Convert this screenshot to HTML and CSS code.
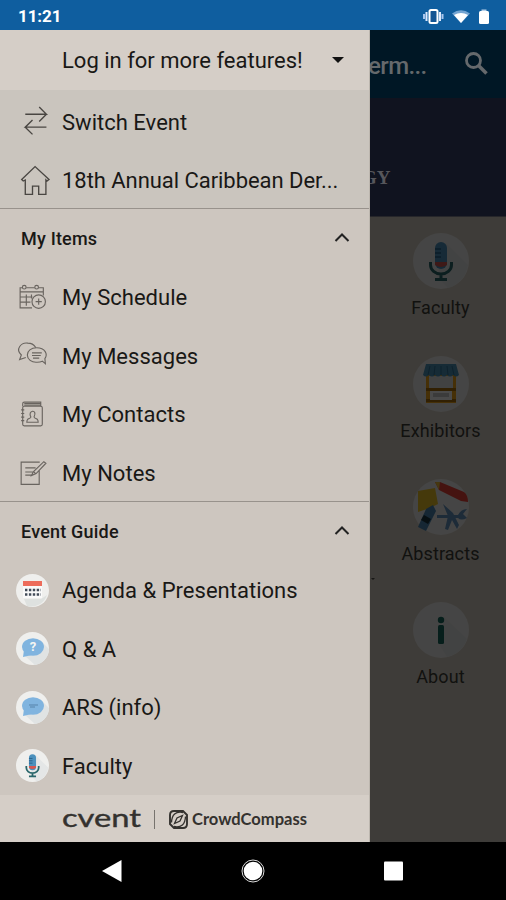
FILE: index.html
```html
<!DOCTYPE html>
<html lang="en">
<head>
<meta charset="utf-8">
<title>Event menu</title>
<link rel="stylesheet" href="styles.css">
</head>
<body>
<svg class="defs" width="0" height="0" aria-hidden="true">
  <symbol id="mic" viewBox="0 0 56 56">
    <circle cx="28" cy="28" r="28" fill="#efefed"/>
    <path d="M33 10 55 32a28 28 0 0 1-20 23L24 44z" fill="#e4e6e6"/>
    <path d="M17.500 29v3a10.500 9 0 0 0 21 0v-3M28 41v6M22 46.500h12" fill="none" stroke="#28666a" stroke-width="3"/>
    <rect x="22" y="9" width="12" height="27" rx="6" fill="#4c91bd"/>
    <path d="M22 29h12v3q-6 4-12 0z" fill="#d5564f"/>
    <path d="M22 16h6M22 20h6M22 24h6" stroke="#245d87" stroke-width="1.500"/>
  </symbol>
  <symbol id="bubble" viewBox="0 0 33 33">
    <circle cx="16.500" cy="16.500" r="16.500" fill="#efefed"/>
    <path d="m26 10 7 7a16.500 16.500 0 0 1-14 16L9 24z" fill="#e0e3e3"/>
    <ellipse cx="17" cy="15" rx="11" ry="8.700" fill="#80b4df"/>
    <path d="m8 18-1 7 9-2z" fill="#80b4df"/>
  </symbol>
</svg>
<header class="status">
  <span>11:21</span>
  <svg width="70" height="20" viewBox="0 0 70 20">
    <path d="M2 8v5M20.500 8v5" stroke="#a9c6ed" stroke-width="2"/>
    <path d="M4.500 6v9M18 6v9" stroke="#dce9ff" stroke-width="2"/>
    <rect x="7.500" y="4" width="8" height="13" rx="1.500" fill="#125594" stroke="#fff" stroke-width="2"/>
    <path d="M30 7.500Q39 1 48 7.500L39 17z" fill="#75a5d2"/>
    <path d="M32 9Q39 5 46 9L39 17z" fill="#fff"/>
    <rect x="57" y="5" width="10" height="13" rx="1.500" fill="#fff"/><path d="M59.500 3.500h5V5h-5z" fill="#b8d1e9"/>
  </svg>
</header>
<main class="screen">
  <nav class="drawer">
    <div class="login"><span>Log in for more features!</span><i class="caret"></i></div>
    <section class="group first">
      <div class="row"><svg class="icon line" viewBox="0 0 32 32"><path d="M9 9h20.500l-7-7m7 7-7 7M29.500 21.500H9l7-7m-7 7 7 7"/></svg><span>Switch Event</span></div>
      <div class="row"><svg class="icon line" viewBox="0 0 32 32"><path d="M5.500 15 18.500 2.500 32 15l-2 1.500-1-1v14h-7v-8h-6v8h-7v-14l-2 1z"/></svg><span class="home">18th Annual Caribbean Der...</span></div>
    </section>
    <section class="group">
      <h2>My Items<svg class="chevron" viewBox="0 0 16 10"><path d="m1.500 8 6.500-6.500L14.500 8"/></svg></h2>
      <div class="row"><svg class="icon fine" viewBox="0 0 32 32"><path d="M15.500 26H4V6.500h2M10 6.500h8M22 6.500h4.500V14M4 10.500h22.500M4 15.500h12M4 20.500h10M10 13v11M15 13v4"/><circle cx="8" cy="6" r="1.800"/><circle cx="20" cy="6" r="1.800"/><circle cx="22" cy="20" r="6.500"/><path d="M22 17v6M19 20h6"/></svg><span>My Schedule</span></div>
      <div class="row"><svg class="icon fine" viewBox="0 0 32 32"><path d="M9.500 18 3.500 20l1.700-4.500C-1 10 5 3 11.500 4q5 0 7.500 4M20 8.500c-5.500 0-9 3-9 7s4 7.500 9.500 7q3 0 5-1l3 2.500-.5-5c3-4 .5-10.500-8-10.500M15.500 13.500h9.500M15.500 16h8.500M16.500 18.500h6"/></svg><span>My Messages</span></div>
      <div class="row"><svg class="icon fine" viewBox="0 0 32 32"><path d="M6.500 8V5.500Q6.500 4 8 4h16v4M8 5.500h16M8 7h16"/><rect x="6.500" y="8" width="19" height="19" rx="1.500"/><path d="M5 11.500h3M5 15h3M5 18.500h3M5 22h3"/><path d="M14.500 18.500c-4-6.500 7-8.500 3 0q0 1 3 2 1 1 1 3h-11q0-2 1-3 3-1 3-2"/></svg><span>My Contacts</span></div>
      <div class="row"><svg class="icon fine" viewBox="0 0 32 32"><path d="M23 6H5v21.500h17.500V14M9 11.500h10M9 15.500h8M9 18.500h6M15 19l2-4L27 5.500l2 1.500-9.500 10zM17 15l2 2"/></svg><span>My Notes</span></div>
    </section>
    <section class="group">
      <h2>Event Guide<svg class="chevron" viewBox="0 0 16 10"><path d="m1.500 8 6.500-6.500L14.500 8"/></svg></h2>
      <div class="row"><svg class="round" viewBox="0 0 33 33"><circle cx="16.500" cy="16.500" r="16.500" fill="#efefed"/><path d="M8 25h17l6-4a16.500 16.500 0 0 1-20 11z" fill="#dee1df"/><path d="M7 7h19v17H7z" fill="#fafafa"/><path d="M7 7h19v5H7z" fill="#ed6c5b"/><path d="M9 16h16M9 20.500h16" stroke="#424b58" stroke-width="2.500" stroke-dasharray="2.400 1.500"/></svg><span>Agenda &amp; Presentations</span></div>
      <div class="row"><svg class="round" viewBox="0 0 33 33"><use href="#bubble"/><text class="question" x="17" y="19">?</text></svg><span>Q &amp; A</span></div>
      <div class="row"><svg class="round" viewBox="0 0 33 33"><use href="#bubble"/><path d="M13 14h9M14 16h5" stroke="#5683aa"/></svg><span>ARS (info)</span></div>
      <div class="row"><svg class="round" viewBox="0 0 56 56"><use href="#mic"/></svg><span>Faculty</span></div>
    </section>
    <footer class="brand">
      <svg width="246" height="40" viewBox="0 -8 246 40">
        <text class="cvent" x="0" y="20" textLength="79" lengthAdjust="spacingAndGlyphs">cvent</text>
        <path d="M92.500 3v19" stroke="#77736e"/>
        <path d="M112 4h9l4 4v9q0 4-4 4h-9l-4-4V8q0-4 4-4z" fill="none" stroke="#34322f" stroke-width="1.900"/>
        <path d="M121 5.500q-11-2-11.500 10M112 19.500q11 2 11.500-10M120.500 8.500 118 14l-5.500 2.500L115 11z" fill="none" stroke="#34322f" stroke-width="1.300"/>
        <text class="compass" x="130" y="18" textLength="115" lengthAdjust="spacingAndGlyphs">CrowdCompass</text>
      </svg>
    </footer>
  </nav>
  <aside class="page">
    <div class="appbar"><span>erm...</span><svg width="26" height="26" viewBox="0 0 26 26"><circle cx="9.500" cy="9.500" r="7" fill="none" stroke="#65696c" stroke-width="2.800"/><path d="m14.500 14.500 8 8" stroke="#65696c" stroke-width="3.500"/></svg></div>
    <div class="banner"><span>GY</span></div>
    <div class="tiles">
      <div class="tile"><svg viewBox="0 0 56 56"><use href="#mic"/></svg><span>Faculty</span></div>
      <div class="tile"><svg viewBox="0 0 56 56"><circle cx="28" cy="28" r="28" fill="#efefed"/><path d="M13 19h30v28H13z" fill="#f0a719"/><path d="M16 20h24v12H16z" fill="#dfe3e5"/><path d="M13 32h30v3H13zM13 43h30v3H13z" fill="#a86d0a"/><path d="M17 35h22v9H17z" fill="#fff"/><path d="M20 39h16" stroke="#ccc" stroke-width="4"/><path d="M13 8h30l3 11q-3 3-6 0-3 3-6 0-3 3-6 0-3 3-6 0-3 3-6 0-3 3-6 0z" fill="#4b93ba"/><path d="m17 10-2 9m7-9-1 9m7-9v9m6-9 1 9m4-9 2 9" stroke="#2f7398"/></svg><span>Exhibitors</span></div>
      <div class="tile"><svg viewBox="0 0 56 56"><circle cx="28" cy="28" r="28" fill="#efefed"/><path d="m5 12 17-3 3 16-8 4-12 4z" fill="#efc326"/><path d="m22 3 5 0 24 10q4 3 4 10l-7-1-22-11z" fill="#ef4038"/><path d="m22 3 5 0-1 8z" fill="#f1c23c"/><path d="m20 26 3 6-10 20-8-4 8-18z" fill="#4b87b2"/><path d="m11 36 7 4-3 5-7-4z" fill="#19333e"/><path d="M24 36h21q3-6 9-6l-4 5 4 4q-6 3-9 0H24zM30 25l10 9 6 12-2 4-5-9-4 10-3-1 3-13z" fill="#6594c1"/></svg><span>Abstracts</span></div>
      <div class="tile"><svg viewBox="0 0 56 56"><circle cx="28" cy="28" r="28" fill="#efefed"/><path d="M31 15 54 37a28 28 0 0 1-20 18l-8-13z" fill="#e5e7e6"/><circle cx="28" cy="18" r="3.200" fill="#16685d"/><rect x="25" y="23" width="6" height="19" rx="1.500" fill="#16685d"/></svg><span>About</span></div>
    </div>
    <i class="tick"></i>
  </aside>
</main>
<footer class="system">
  <svg width="506" height="58" viewBox="0 0 506 58"><path d="M102 29 121.500 18v22z" fill="#fff"/><circle cx="253" cy="29" r="11" fill="none" stroke="#ddd"/><circle cx="253" cy="29" r="9.300" fill="#fff"/><rect x="384" y="19.500" width="19" height="19" rx="1" fill="#fff"/></svg>
</footer>
</body>
</html>
```
FILE: styles.css
```css
* { box-sizing: border-box; }
body { margin: 0; width: 506px; height: 900px; overflow: hidden; background: #000; font-family: Roboto, sans-serif; }
.defs { position: absolute; }
.status { height: 30px; padding: 1px 14px 0 18px; background: #0f5e9f; color: #fff; display: flex; align-items: center; justify-content: space-between; font-size: 17px; font-weight: 700; letter-spacing: -.1px; }
.screen { height: 812px; display: flex; }
.drawer { width: 370px; height: 812px; background: #cdc6bf; color: #191816; border-right: 1px solid #bcb6ae; display: flex; flex-direction: column; }
.login { height: 60px; padding: 1px 25px 0 62px; background: #d5cec7; display: flex; align-items: center; justify-content: space-between; font-size: 22px; }
.caret { border: 6px solid transparent; border-top-color: #111; border-bottom: 0; position: relative; top: -1px; }
.group { height: 293.2px; border-bottom: 1.500px solid #98928c; }
.group.first { height: 119px; padding-top: 2px; background: #cac5be; }
.group:last-of-type { border-bottom: 0; }
.row { height: 58.500px; padding: 1px 0 0 16px; display: flex; align-items: center; font-size: 22px; letter-spacing: .02px; white-space: nowrap; }
.row span { margin-left: 13px; padding-top: 1px; }
.icon { width: 33px; height: 33px; overflow: visible; fill: none; }
.line { stroke: #494642; stroke-width: 1.300; }
.fine { stroke: #69645f; stroke-width: 1.100; }
.round { width: 33px; height: 33px; }
.row .home { letter-spacing: -.05px; }
h2 { height: 58.500px; margin: 0; padding: 0 19px 0 21px; display: flex; align-items: center; justify-content: space-between; font-size: 18px; font-weight: 500; letter-spacing: .2px; }
.chevron { width: 16px; height: 10px; fill: none; stroke: #222; stroke-width: 2; }
.question { fill: #f5f6f2; font-size: 13px; font-weight: 700; text-anchor: middle; letter-spacing: 0; }
.brand { flex: 1; padding-left: 62px; background: #d5cec7; display: flex; align-items: center; }
.brand svg { overflow: visible; }
.cvent { font-family: Lato, sans-serif; font-size: 25px; fill: #34322f; stroke: #34322f; stroke-width: .4px; }
.compass { font-family: Lato, sans-serif; font-size: 17px; font-weight: 700; fill: #34322f; }
.page { position: relative; width: 136px; height: 812px; overflow: hidden; background: #3e3c39; color: #11110f; }
.appbar { height: 68px; padding: 0 16px 0 0; display: flex; align-items: center; justify-content: space-between; background: #001725; color: #65696c; font-size: 24px; font-weight: 500; }
.appbar span { margin-left: -2px; padding-top: 3px; letter-spacing: -.6px; }
.banner { height: 119px; padding-top: 40px; background: #10131f; color: #56565b; font: 700 19px/80px "Liberation Serif", serif; border-bottom: 1px solid #26262a; }
.banner span { margin-left: -8px; display: block; line-height: 80px; }
.tiles { padding: 16px 0 0 5px; }
.tile { height: 123px; display: flex; flex-direction: column; align-items: center; font-size: 18px; letter-spacing: .1px; }
.tile svg { width: 56px; height: 56px; filter: brightness(.29); }
.tile span { margin-top: 8px; }
.tick { position: absolute; left: 1px; top: 548px; border: 2px solid transparent; border-top-color: #171615; }
.system { height: 58px; }
```
